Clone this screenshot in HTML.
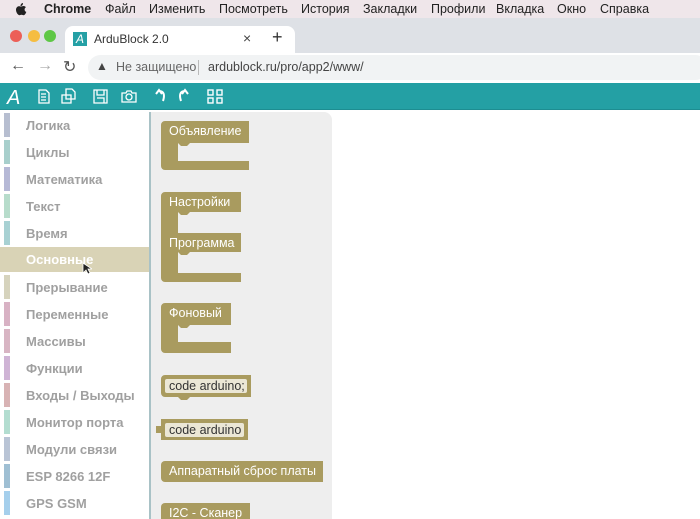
<!DOCTYPE html>
<html><head><meta charset="utf-8"><style>
*{margin:0;padding:0;box-sizing:border-box}
body{width:700px;height:519px;overflow:hidden;background:#fff;font-family:"Liberation Sans","DejaVu Sans",sans-serif;position:relative}
.menu{position:absolute;top:0;left:0;width:700px;height:18px;background:#efe6ea;font-size:12.5px;color:#222}
.menu span{position:absolute;top:2px}
.tabs{position:absolute;top:18px;left:0;width:700px;height:35px;background:#dee1e6}
.dot{position:absolute;top:30px;width:12px;height:12px;border-radius:50%}
.tab{position:absolute;left:65px;top:26px;width:230px;height:27px;background:#fff;border-radius:8px 8px 0 0}
.addr{position:absolute;top:53px;left:0;width:700px;height:30px;background:#fff}
.url{position:absolute;left:88px;top:55px;width:620px;height:25px;background:#f1f3f4;border-radius:13px}
.tool{position:absolute;top:83px;left:0;width:700px;height:27px;background:#24a0a4;border-bottom:1px solid #1d8d91}
.cat{position:absolute;left:0;width:150px;height:25px}
.cat i{position:absolute;left:4px;top:0;width:6px;height:24px}
.cat b{position:absolute;left:26px;top:5px;font-size:13px;color:#a0a0a0;font-weight:bold}
.fly{position:absolute;left:151px;top:112px;width:181px;height:407px;background:#eeeeee;border-radius:0 8px 0 0}
.vline{position:absolute;left:149px;top:112px;width:2px;height:407px;background:#a9c2c6}
.bt{font-size:12.5px;fill:#fff;font-family:"Liberation Sans",sans-serif}
</style></head><body>
<div class="menu">
<svg width="12" height="14" style="position:absolute;left:15px;top:2px"><path d="M8 1c0 2-1 3-2.5 3C5.5 2 7 1 8 1zM6 4.5c1 0 1.6-.5 2.6-.5 1 0 1.8.5 2.3 1.2-2 1.2-1.6 4 .4 4.7-.5 1.5-1.5 3.3-2.6 3.3-.9 0-1.2-.5-2.2-.5s-1.4.5-2.2.5C3 13.2 1 10.5 1 7.8 1 5.5 2.5 4.2 4 4.2c1 0 1.4.3 2 .3z" fill="#222"/></svg>
<span style="left:44px;font-weight:bold">Chrome</span>
<span style="left:105px">Файл</span><span style="left:149px">Изменить</span><span style="left:219px">Посмотреть</span><span style="left:301px">История</span><span style="left:363px">Закладки</span><span style="left:431px">Профили</span><span style="left:496px">Вкладка</span><span style="left:557px">Окно</span><span style="left:600px">Справка</span>
</div>
<div class="tabs"></div>
<div class="dot" style="left:10px;background:#ec5f57"></div>
<div class="dot" style="left:28px;background:#f5bd41"></div>
<div class="dot" style="left:44px;background:#5ec746"></div>
<div class="tab">
 <div style="position:absolute;left:8px;top:6px;width:14px;height:14px;background:#25a0a5;color:#fff;font-size:12px;font-style:italic;text-align:center;line-height:14px">A</div>
 <span style="position:absolute;left:29px;top:6px;font-size:12px;color:#333">ArduBlock 2.0</span>
 <span style="position:absolute;left:178px;top:4px;font-size:14px;color:#444">×</span>
</div>
<span style="position:absolute;left:272px;top:27px;font-size:18px;color:#333">+</span>
<div class="addr"></div>
<span style="position:absolute;left:10px;top:57px;font-size:16px;color:#555">←</span>
<span style="position:absolute;left:37px;top:57px;font-size:16px;color:#aaa">→</span>
<span style="position:absolute;left:63px;top:57px;font-size:16px;color:#555">↻</span>
<div class="url">
 <span style="position:absolute;left:8px;top:4px;font-size:12px;color:#444">▲</span>
 <span style="position:absolute;left:28px;top:5px;font-size:12.5px;color:#666">Не защищено</span>
 <div style="position:absolute;left:110px;top:5px;width:1px;height:15px;background:#bbb"></div>
 <span style="position:absolute;left:120px;top:5px;font-size:12.5px;color:#444">ardublock.ru/pro/app2/www/</span>
</div>
<div class="tool">
<svg width="240" height="27" style="position:absolute;left:0;top:0" fill="none" stroke="#fff" stroke-width="1.6">
<text x="7" y="21" fill="#fff" stroke="none" font-size="20" font-style="italic" font-family="Liberation Sans">A</text>
<path d="M39 7h7l3 3v10h-10z M41 11h5M41 14h5M41 17h5" stroke-width="1.3"/>
<path d="M66 6h6l3 3v7h-9z M62 12h9v8h-9z" stroke-width="1.3"/>
<path d="M94 7h13v13h-13z M97 7v5h7v-5 M97 15h7v5" stroke-width="1.3"/>
<path d="M122 10h4l1-2h4l1 2h4v9h-14z" stroke-width="1.3"/><circle cx="129" cy="14" r="3" stroke-width="1.3"/>
<path d="M156 11l3-4 3 4 M159 8c5 0 6 4 4 10" stroke-width="2"/>
<path d="M188 11l-3-4-3 4 M185 8c-5 0-6 4-4 10" stroke-width="2"/>
<rect x="208" y="7" width="5" height="5" stroke-width="1.4"/><rect x="217" y="7" width="5" height="5" stroke-width="1.4"/><rect x="208" y="15" width="5" height="5" stroke-width="1.4"/><rect x="217" y="15" width="5" height="5" stroke-width="1.4"/>
</svg>
</div>
<div class="cat" style="top:113px"><i style="background:#b7bed0"></i><b>Логика</b></div>
<div class="cat" style="top:140px"><i style="background:#a8cfcc"></i><b>Циклы</b></div>
<div class="cat" style="top:167px"><i style="background:#b6b9d6"></i><b>Математика</b></div>
<div class="cat" style="top:194px"><i style="background:#b7dccb"></i><b>Текст</b></div>
<div class="cat" style="top:221px"><i style="background:#a8d1d3"></i><b>Время</b></div>
<div class="cat" style="top:247px;background:#d9d3b6"><i style="background:#d9d3b6"></i><b style="color:#fff">Основные</b></div>
<div class="cat" style="top:275px"><i style="background:#d6d3bd"></i><b>Прерывание</b></div>
<div class="cat" style="top:302px"><i style="background:#d8b2c4"></i><b>Переменные</b></div>
<div class="cat" style="top:329px"><i style="background:#d8b5c3"></i><b>Массивы</b></div>
<div class="cat" style="top:356px"><i style="background:#cfb4d5"></i><b>Функции</b></div>
<div class="cat" style="top:383px"><i style="background:#d8b3b4"></i><b>Входы / Выходы</b></div>
<div class="cat" style="top:410px"><i style="background:#b3ddd0"></i><b>Монитор порта</b></div>
<div class="cat" style="top:437px"><i style="background:#b9c4d5"></i><b>Модули связи</b></div>
<div class="cat" style="top:464px"><i style="background:#9fbfd3"></i><b>ESP 8266 12F</b></div>
<div class="cat" style="top:491px"><i style="background:#a5cfec"></i><b>GPS GSM</b></div>
<svg width="10" height="14" style="position:absolute;left:82px;top:262px"><path d="M1 1v10l3-3 2 4 2-1-2-4h4z" fill="#222" stroke="#fff" stroke-width=".8"/></svg>
<div class="fly"></div>
<div class="vline"></div>
<svg width="200" height="407" style="position:absolute;left:150px;top:112px">
<g fill="#a99b5f">
<path d="M11 13a4 4 0 0 1 4-4H99V31H40l-3 3h-6l-3-3V49H99V58H15a4 4 0 0 1-4-4Z"/>
<path d="M11 84a4 4 0 0 1 4-4H91V100H40l-3 3h-6l-3-3V121H91V140H40l-3 3h-6l-3-3V161H91V170H15a4 4 0 0 1-4-4Z"/>
<path d="M11 195a4 4 0 0 1 4-4H81V213H40l-3 3h-6l-3-3V230H81V241H15a4 4 0 0 1-4-4Z"/>
<path d="M11 267a4 4 0 0 1 4-4H101V285H40l-3 3h-6l-3-3H15a4 4 0 0 1-4-4Z"/>
<path d="M11 307H98V328H11V321H6V314H11Z"/>
<path d="M11 353a4 4 0 0 1 4-4H173V370H15a4 4 0 0 1-4-4Z"/>
<path d="M11 395a4 4 0 0 1 4-4H100V411H11Z"/>
</g>
<rect x="15" y="267" width="82" height="14" rx="2" fill="#ebe7d6"/>
<rect x="15" y="311" width="79" height="14" rx="2" fill="#ebe7d6"/>
<text class="bt" x="19" y="23">Объявление</text>
<text class="bt" x="19" y="94">Настройки</text>
<text class="bt" x="19" y="135">Программа</text>
<text class="bt" x="19" y="205">Фоновый</text>
<text class="bt" x="19" y="278" style="fill:#333">code arduino;</text>
<text class="bt" x="19" y="322" style="fill:#333">code arduino</text>
<text class="bt" x="19" y="363">Аппаратный сброс платы</text>
<text class="bt" x="19" y="405">I2C - Сканер</text>
</svg>
</body></html>
